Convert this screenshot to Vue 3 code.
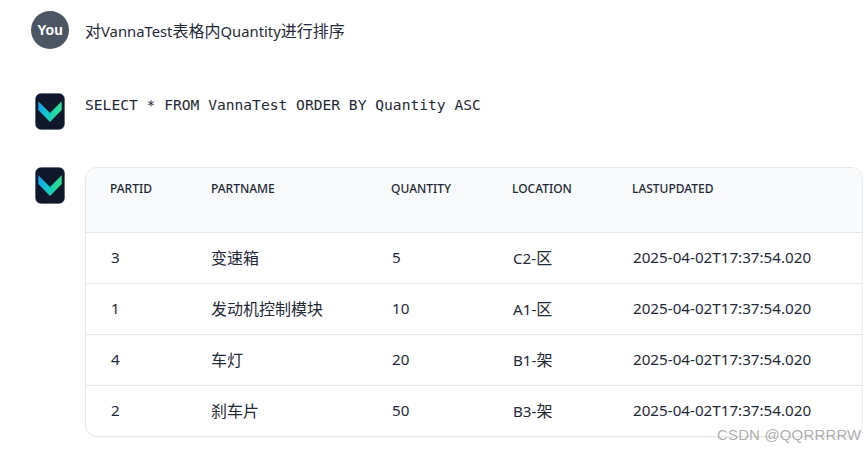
<script setup>
const rows = [
  { id: '3', name: '变速箱', qty: '5', loc: 'C2-', zone: '区' },
  { id: '1', name: '发动机控制模块', qty: '10', loc: 'A1-', zone: '区' },
  { id: '4', name: '车灯', qty: '20', loc: 'B1-', zone: '架' },
  { id: '2', name: '刹车片', qty: '50', loc: 'B3-', zone: '架' },
]
const heads = ['PARTID', 'PARTNAME', 'QUANTITY', 'LOCATION', 'LASTUPDATED']
</script>

<template>
  <div class="page">
    <div class="msg user">
      <div class="you">You</div>
      <p class="text"><span class="cjk">对</span>VannaTest<span class="cjk">表格内</span>Quantity<span class="cjk">进行排序</span></p>
    </div>
    <div class="msg sql">
      <svg class="logo" viewBox="0 0 30 37" width="30" height="37">
        <defs>
          <linearGradient id="g1" x1="0" y1="0" x2="1" y2="0.2">
            <stop offset="0" stop-color="#1a9cf2" /><stop offset="0.5" stop-color="#10c9c8" /><stop offset="1" stop-color="#2fe08a" />
          </linearGradient>
        </defs>
        <rect x="0.2" y="0.2" width="29.6" height="36.600" rx="6" fill="#0f172a" stroke="#c9ced6" stroke-width="0.4" />
        <path d="M3.300 8.300 L15 20 L26.700 8.300 V17 L15 29 L3.300 17 Z" fill="url(#g1)" />
      </svg>
      <code class="code">SELECT * FROM VannaTest ORDER BY Quantity ASC</code>
    </div>
    <div class="msg result">
      <svg class="logo" viewBox="0 0 30 37" width="30" height="37">
        <rect x="0.2" y="0.2" width="29.6" height="36.600" rx="6" fill="#0f172a" stroke="#c9ced6" stroke-width="0.4" />
        <path d="M3.300 8.300 L15 20 L26.700 8.300 V17 L15 29 L3.300 17 Z" fill="url(#g1)" />
      </svg>
      <div class="card">
        <div class="row head">
          <span v-for="h in heads" :key="h">{{ h }}</span>
        </div>
        <div v-for="r in rows" :key="r.id" class="row body">
          <span>{{ r.id }}</span>
          <span class="cjk">{{ r.name }}</span>
          <span>{{ r.qty }}</span>
          <span>{{ r.loc }}<span class="cjk">{{ r.zone }}</span></span>
          <span>2025-04-02T17:37:54.020</span>
        </div>
      </div>
    </div>
    <div class="mark">CSDN @QQRRRRW</div>
  </div>
</template>

<style>
html, body { margin: 0; background: #fff; overflow: hidden; }
</style>

<style scoped>
.page {
  position: relative;
  width: 863px;
  height: 450px;
  overflow: hidden;
  box-sizing: border-box;
  padding-top: 11px;
  font-family: "Noto Sans", "Noto Sans CJK SC", sans-serif;
  color: #1f2937;
}
.cjk { font-size: 16px; }
.msg { display: flex; }
.user { align-items: center; gap: 16px; padding-left: 31px; height: 38px; }
.you {
  width: 38px; height: 38px; border-radius: 50%;
  background: #4b5563; color: #fff;
  display: flex; align-items: center; justify-content: center;
  font: 700 14px "Liberation Sans", sans-serif;
}
.text { margin: 0; font-size: 14.800px; position: relative; top: -0.5px; }
.logo { flex: none; display: block; }
.sql { margin-top: 44px; padding-left: 35px; gap: 20px; height: 37px; align-items: flex-start; }
.code {
  font: 14.620px/24px "DejaVu Sans Mono", monospace;
  color: #1f2937;
}
.result { margin-top: 37px; padding-left: 35px; gap: 20px; align-items: flex-start; }
.card {
  width: 778px;
  box-sizing: border-box;
  border: 1px solid #e5e7eb;
  border-radius: 12px;
  overflow: hidden;
  box-shadow: 0 1px 2px rgba(0,0,0,.04);
}
.row { display: grid; }
.head {
  grid-template-columns: 101px 180px 121px 120px 1fr;
  padding-left: 24px;
  height: 64px;
  background: #f9fafb;
  font-size: 12px;
  font-weight: 500;
  line-height: 41px;
}
.body {
  grid-template-columns: 100px 181px 121px 120px 1fr;
  padding-left: 25px;
  height: 48px;
  padding-bottom: 2px;
  border-top: 1px solid #e5e7eb;
  align-items: center;
  font-size: 15.200px;
}
.mark {
  position: absolute; left: 717px; top: 426px;
  font: 15px "Liberation Sans", sans-serif;
  letter-spacing: .15px;
  color: rgba(120,120,120,.6);
  white-space: nowrap;
}
</style>
